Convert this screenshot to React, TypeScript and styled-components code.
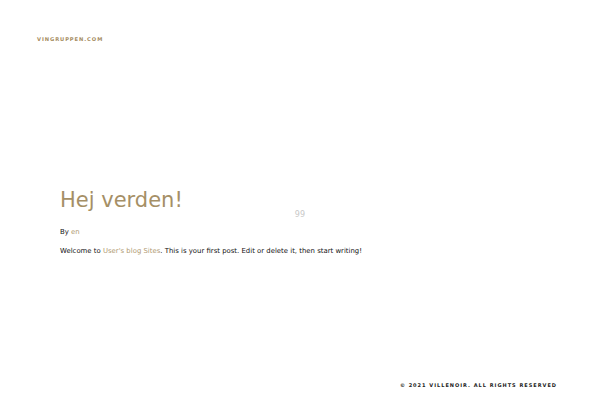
import React from "react";
import styled, { createGlobalStyle } from "styled-components";

const Global = createGlobalStyle`
  html, body { margin: 0; padding: 0; background: #fff; }
  body { font-family: "DejaVu Sans", sans-serif; }
`;

const Page = styled.div`
  width: 600px;
  height: 400px;
  display: flex;
  flex-direction: column;
  box-sizing: border-box;
`;

const Header = styled.header`
  padding: 32px 0 0 37px;
  height: 150px;
  box-sizing: border-box;
  line-height: 8px;
`;

const Brand = styled.a`
  font-size: 5.2px;
  font-weight: bold;
  letter-spacing: 0.9px;
  color: #a58c5f;
  text-decoration: none;
`;

const Main = styled.main`
  flex: 1;
  padding: 38px 0 0 60px;
`;

const TitleRow = styled.div`
  display: flex;
  align-items: flex-end;
`;

const Title = styled.h1`
  margin: 0;
  font-size: 21px;
  font-weight: normal;
  color: #a58f66;
  line-height: 24px;
`;

const Count = styled.span`
  font-size: 8px;
  color: #c8c8c8;
  margin-left: 112px;
  margin-bottom: -7px;
`;

const Para = styled.p<{ $gap: number }>`
  margin: ${(p) => p.$gap}px 0 0;
  font-size: 6.92px;
  color: #111;
  line-height: 10px;
`;

const Link = styled.a`
  color: #b09a72;
  text-decoration: none;
`;

const Footer = styled.footer`
  display: flex;
  justify-content: flex-end;
  padding: 0 43px 12px 0;
`;

const Copy = styled.span`
  font-size: 5px;
  font-weight: bold;
  letter-spacing: 1px;
  color: #222;
`;

export default function App() {
  return (
    <Page>
      <Global />
      <Header>
        <Brand href="#">VINGRUPPEN.COM</Brand>
      </Header>
      <Main>
        <TitleRow>
          <Title>Hej verden!</Title>
          <Count>99</Count>
        </TitleRow>
        <Para $gap={15}>
          By <Link href="#">en</Link>
        </Para>
        <Para $gap={9}>
          Welcome to <Link href="#">User's blog Sites</Link>. This is your first post. Edit or delete it, then start writing!
        </Para>
      </Main>
      <Footer>
        <Copy>© 2021 VILLENOIR. ALL RIGHTS RESERVED</Copy>
      </Footer>
    </Page>
  );
}
